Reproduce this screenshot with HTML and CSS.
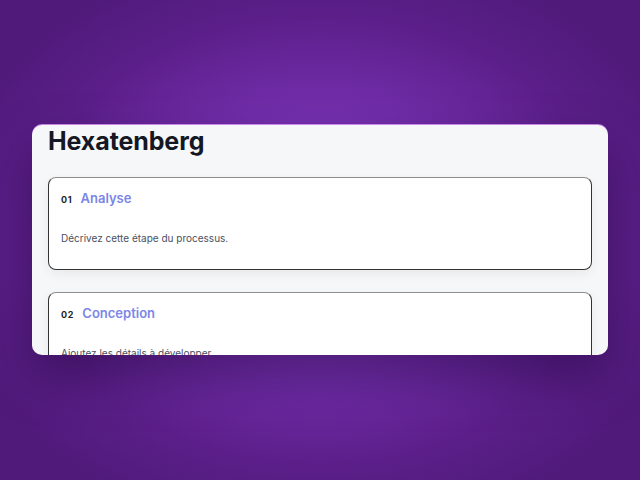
FILE: index.html
```html
<!DOCTYPE html>
<html lang="fr">
<head>
<meta charset="utf-8">
<title>Hexatenberg</title>
<link rel="stylesheet" href="styles.css">
</head>
<body>
<main class="stage">
  <section class="panel">
    <h1 class="title">Hexatenberg</h1>
    <div class="steps">
      <article class="step">
        <header class="step-head">
          <span class="step-num">01</span>
          <span class="step-name">Analyse</span>
        </header>
        <p class="step-desc">Décrivez cette étape du processus.</p>
      </article>
      <article class="step">
        <header class="step-head">
          <span class="step-num">02</span>
          <span class="step-name">Conception</span>
        </header>
        <p class="step-desc">Ajoutez les détails à développer.</p>
      </article>
    </div>
  </section>
</main>
</body>
</html>
```

FILE: styles.css
```css
* { box-sizing: border-box; }
html, body { margin: 0; padding: 0; }
body {
  width: 640px;
  height: 480px;
  overflow: hidden;
  font-family: Inter, "Noto Sans", sans-serif;
  background: radial-gradient(ellipse 60% 62% at 50% 50%, #8a36c4 0%, #7630b0 40%, #5c1f8a 75%, #4f1a7a 100%);
}
.stage {
  padding: 125px 32px 0 32px;
}
.panel {
  height: 230px;
  overflow: hidden;
  background: #f6f7f9;
  border-radius: 10px;
  padding: 1px 16px 0 16px;
  box-shadow: 0 -1px 0 rgba(236, 170, 255, 0.75), 0 22px 50px rgba(20, 0, 40, 0.42);
}
.title {
  margin: 0;
  font-size: 25px;
  line-height: 31px;
  font-weight: 700;
  color: #141824;
  letter-spacing: -0.1px;
}
.steps {
  margin-top: 20px;
  display: flex;
  flex-direction: column;
  gap: 22px;
}
.step {
  background: #ffffff;
  border: 1px solid #333333;
  border-top-color: #8e8e8e;
  border-radius: 8px;
  padding: 10px 12px 23px 12px;
  box-shadow: 0 4px 12px rgba(0, 0, 0, 0.06);
}
.step-head {
  display: flex;
  align-items: baseline;
  gap: 8px;
  line-height: 20px;
}
.step-num {
  font-size: 9px;
  font-weight: 700;
  color: #1b1f2a;
  letter-spacing: 0.8px;
}
.step-name {
  font-size: 13px;
  font-weight: 600;
  color: #7b86e6;
}
.step-desc {
  margin: 20px 0 0 0;
  font-size: 10px;
  line-height: 16px;
  color: #4a5060;
}
```
